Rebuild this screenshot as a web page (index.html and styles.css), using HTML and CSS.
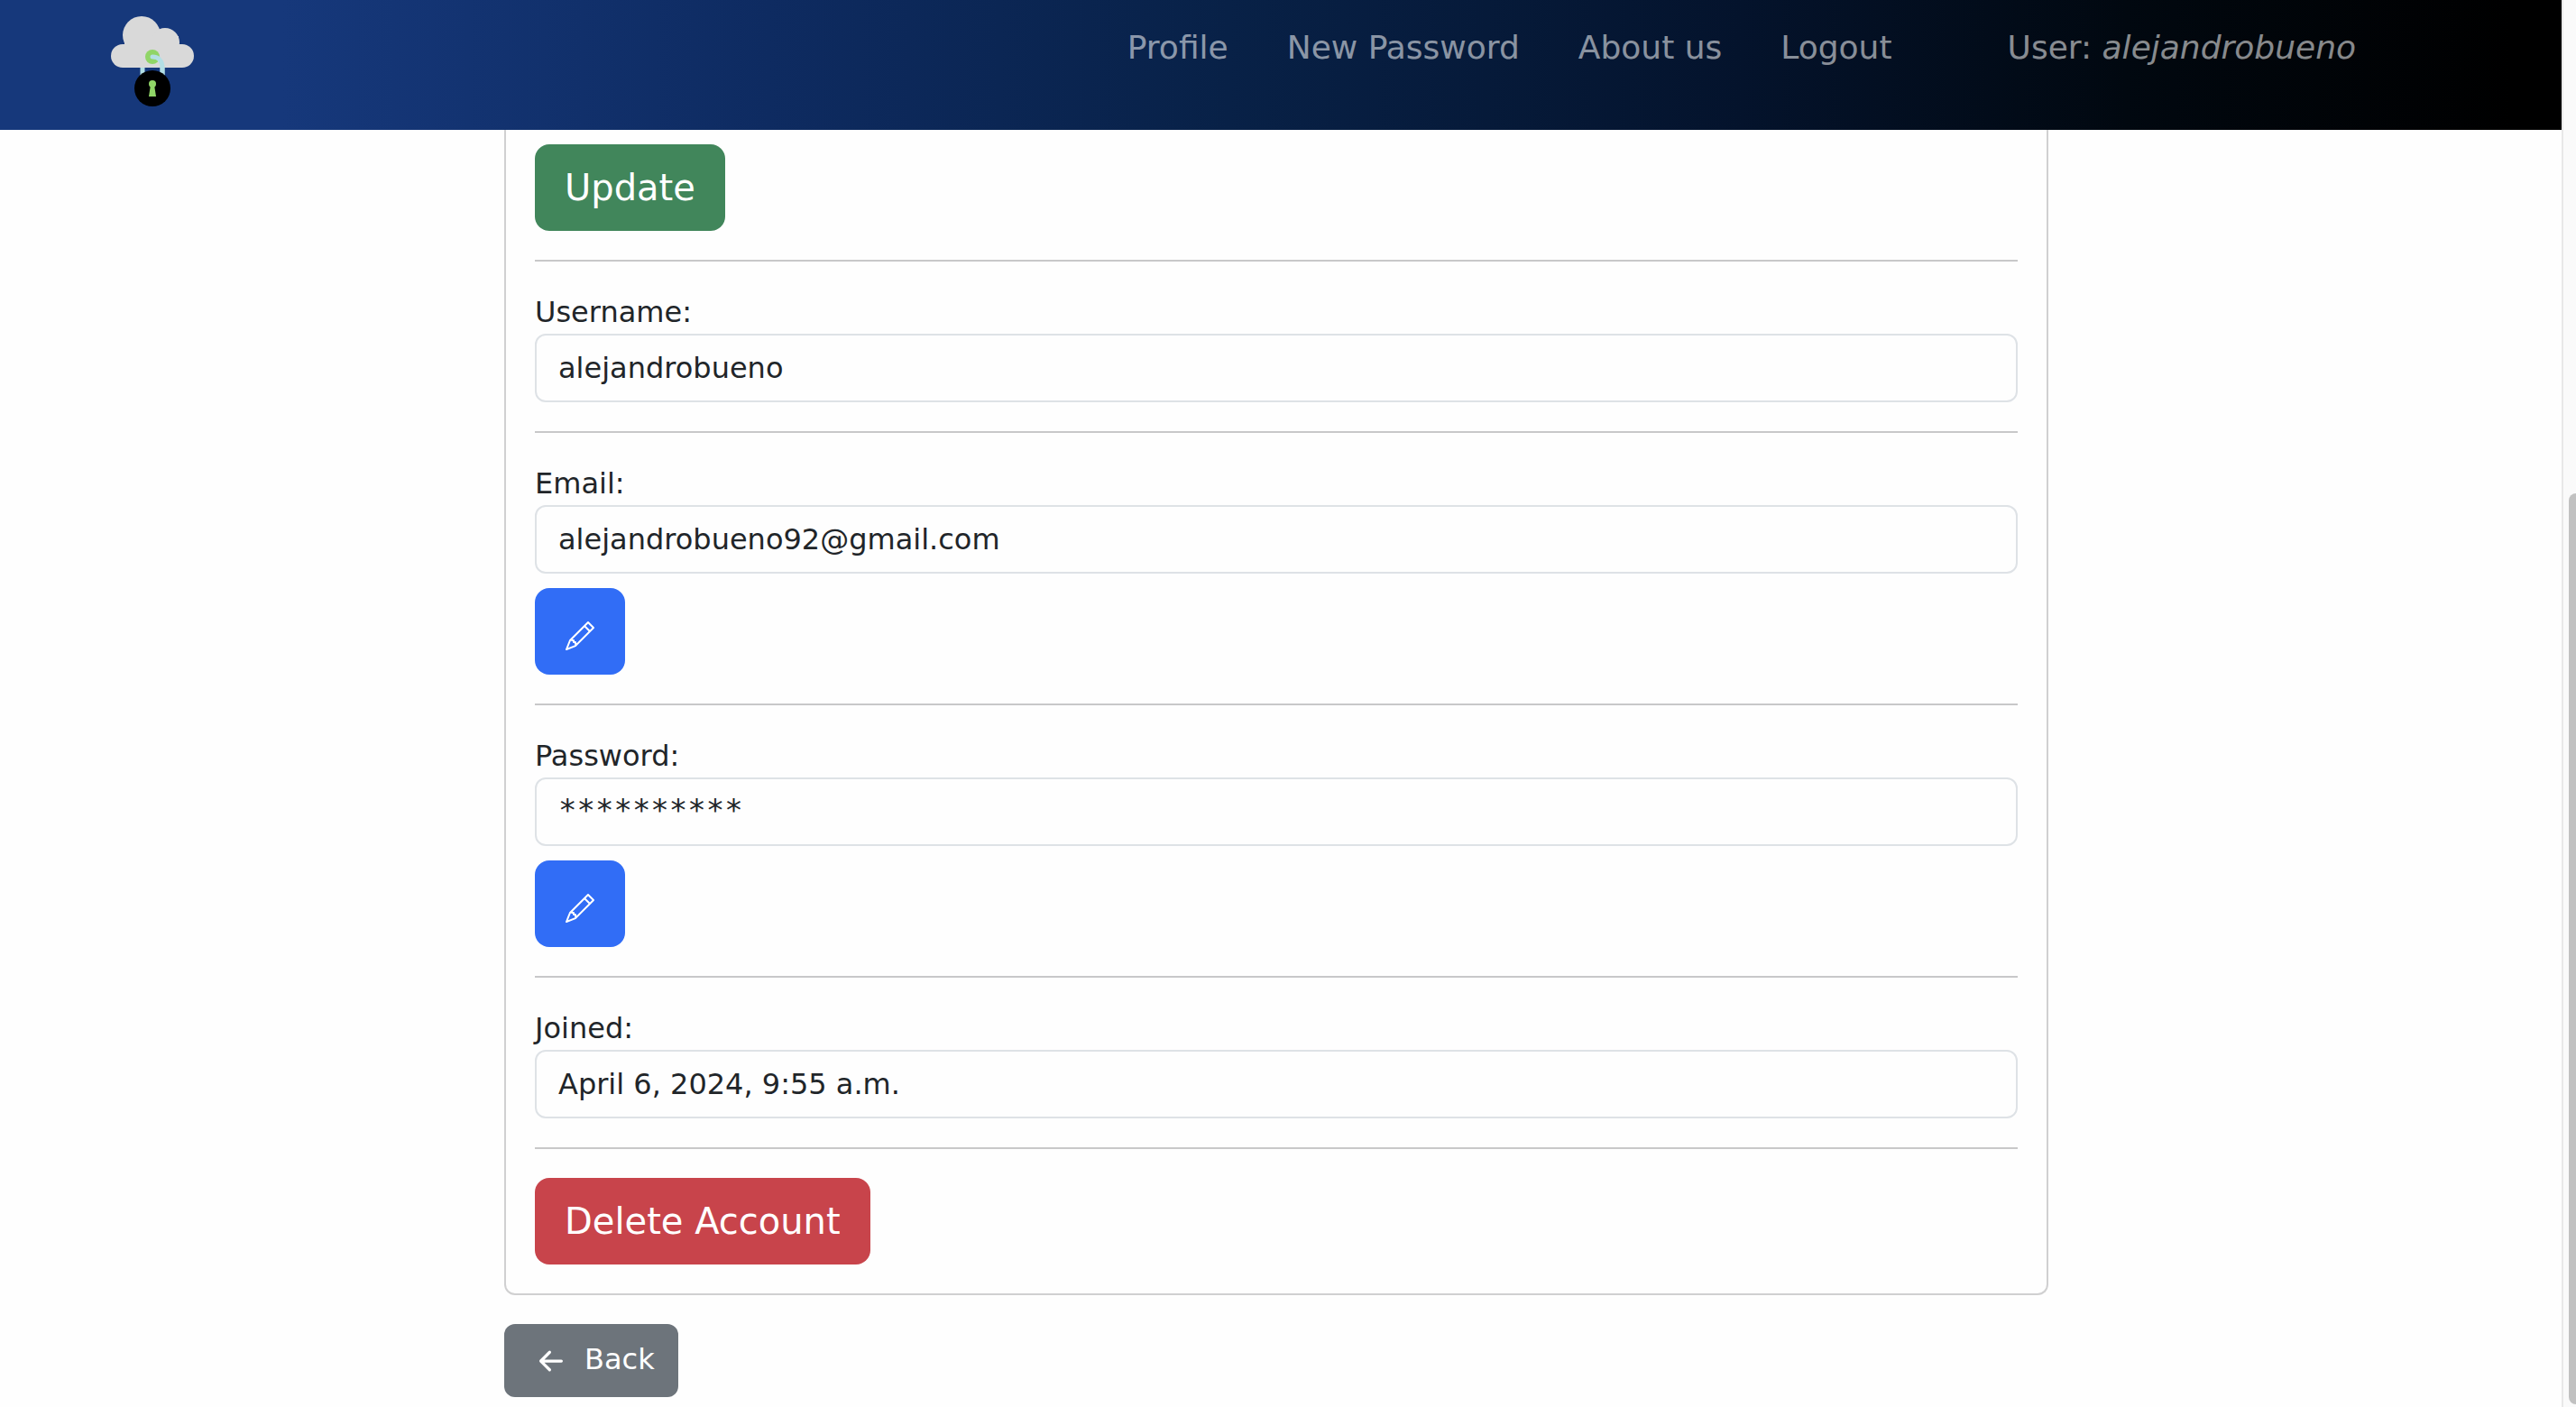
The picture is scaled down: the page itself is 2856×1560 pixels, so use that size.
FILE: index.html
```html
<!DOCTYPE html>
<html lang="en">
<head>
<meta charset="utf-8">
<title>Profile</title>
<link rel="stylesheet" href="styles.css">
</head>
<body>
<div class="page">
  <header class="navbar">
    <a class="brand" href="#" aria-label="Home">
      <svg class="logo" viewBox="23 18 92 100" aria-hidden="true">
        <path d="M58 72v20M80 72v20" fill="none" stroke="#b3dfe5" stroke-width="5"/>
        <g fill="#d9d9d9">
          <circle cx="57" cy="39" r="21"/>
          <circle cx="83" cy="47" r="16"/>
          <rect x="23" y="49" width="92" height="26" rx="13"/>
          <rect x="38" y="40" width="60" height="20"/>
        </g>
        <circle cx="69" cy="63" r="8" fill="#90d567"/>
        <path d="M69 63c7 0 11 5 11 12v12" fill="none" stroke="#b3dfe5" stroke-width="5" stroke-linecap="round"/>
        <circle cx="69" cy="98" r="20" fill="#000"/>
        <circle cx="69" cy="93" r="4" fill="#90d567"/>
        <path d="M67 94h4l2 13h-8z" fill="#90d567"/>
      </svg>
    </a>
    <nav class="nav">
      <a class="nav-link" href="#">Profile</a>
      <a class="nav-link" href="#">New Password</a>
      <a class="nav-link" href="#">About us</a>
      <a class="nav-link" href="#">Logout</a>
    </nav>
    <span class="nav-user">User: <i>alejandrobueno</i></span>
  </header>

  <main class="container">
    <form class="card">
      <button class="btn btn-lg btn-success" type="button">Update</button>
      <hr class="rule">
      <div class="field">
        <label for="username">Username:</label>
        <input class="control" id="username" type="text" value="alejandrobueno" readonly>
      </div>
      <hr class="rule">
      <div class="field">
        <label for="email">Email:</label>
        <input class="control" id="email" type="text" value="alejandrobueno92@gmail.com" readonly>
      </div>
      <button class="btn btn-lg btn-primary btn-edit" type="button" aria-label="Edit email">
        <svg class="icon-pencil" viewBox="0 0 16 16" fill="currentColor" aria-hidden="true"><path d="M12.146.146a.5.5 0 0 1 .708 0l3 3a.5.5 0 0 1 0 .708l-10 10a.5.5 0 0 1-.168.11l-5 2a.5.5 0 0 1-.65-.65l2-5a.5.5 0 0 1 .11-.168zM11.207 2.5 13.5 4.793 14.793 3.5 12.5 1.207zm1.586 3L10.5 3.207 4 9.707V10h.5a.5.5 0 0 1 .5.5v.5h.5a.5.5 0 0 1 .5.5v.5h.293zm-9.761 5.175-.106.106-1.528 3.821 3.821-1.528.106-.106A.5.5 0 0 1 5 12.5V12h-.5a.5.5 0 0 1-.5-.5V11h-.5a.5.5 0 0 1-.468-.325"/></svg>
      </button>
      <hr class="rule">
      <div class="field">
        <label for="password">Password:</label>
        <input class="control control-masked" id="password" type="text" value="**********" readonly>
      </div>
      <button class="btn btn-lg btn-primary btn-edit" type="button" aria-label="Edit password">
        <svg class="icon-pencil" viewBox="0 0 16 16" fill="currentColor" aria-hidden="true"><path d="M12.146.146a.5.5 0 0 1 .708 0l3 3a.5.5 0 0 1 0 .708l-10 10a.5.5 0 0 1-.168.11l-5 2a.5.5 0 0 1-.65-.65l2-5a.5.5 0 0 1 .11-.168zM11.207 2.5 13.5 4.793 14.793 3.5 12.5 1.207zm1.586 3L10.5 3.207 4 9.707V10h.5a.5.5 0 0 1 .5.5v.5h.5a.5.5 0 0 1 .5.5v.5h.293zm-9.761 5.175-.106.106-1.528 3.821 3.821-1.528.106-.106A.5.5 0 0 1 5 12.5V12h-.5a.5.5 0 0 1-.5-.5V11h-.5a.5.5 0 0 1-.468-.325"/></svg>
      </button>
      <hr class="rule">
      <div class="field">
        <label for="joined">Joined:</label>
        <input class="control" id="joined" type="text" value="April 6, 2024, 9:55 a.m." readonly>
      </div>
      <hr class="rule">
      <button class="btn btn-lg btn-danger" type="button">Delete Account</button>
    </form>
    <a class="btn btn-secondary" href="#">
      <svg class="icon-arrow" viewBox="0 0 16 16" fill="currentColor" aria-hidden="true"><path d="M12 8a.5.5 0 0 1-.5.5H5.707l2.147 2.146a.5.5 0 0 1-.708.708l-3-3a.5.5 0 0 1 0-.708l3-3a.5.5 0 1 1 .708.708L5.707 7.5H11.5a.5.5 0 0 1 .5.5"/></svg>
      <span class="btn-text">Back</span>
    </a>
  </main>
</div>
<div class="scroll-track" aria-hidden="true"><div class="scroll-thumb"></div></div>
</body>
</html>
```
FILE: styles.css
```css
*, *::before, *::after { box-sizing: border-box; }

body {
  margin: 0;
  display: flex;
  min-height: 100vh;
  overflow: hidden;
  background: #fefefe;
  color: #212529;
  font: 32px/48px Verdana, "DejaVu Sans", sans-serif;
}

.page { flex: 1; min-width: 0; }

/* Top bar */
.navbar {
  display: flex;
  align-items: flex-start;
  height: 144px;
  padding: 18px 228px 0 123px;
  background: linear-gradient(to right, #16387b 11%, #0e2b61 30%, #082147 48%, #04132c 68%, #010810 83%, #000 98%);
  color: rgba(255, 255, 255, .55);
  font-size: 36px;
  line-height: 54px;
}
.brand { margin-right: auto; }
.logo { display: block; width: 92px; height: 100px; }
.nav { display: flex; gap: 65px; padding-top: 8px; }
.nav-link { color: inherit; text-decoration: none; }
.nav-user { padding: 8px 0 0 128px; }

/* Profile card */
.container {
  width: 1722px;
  max-width: 100%;
  margin: 0 auto;
  padding-right: 10px;
}
.card {
  padding: 16px 32px 32px;
  border: 2px solid #d0d0d1;
  border-top: 0;
  border-radius: 0 0 12px 12px;
}
.rule {
  height: 2px;
  margin: 32px 0;
  border: 0;
  background: #c8c8c9;
}
.field { display: flex; flex-direction: column; }
.control {
  width: 100%;
  height: 76px;
  padding: 12px 24px;
  border: 2px solid #dee2e6;
  border-radius: 12px;
  background: transparent;
  color: inherit;
  font: inherit;
}
.control-masked {
  padding-bottom: 16px;
  font-family: "DejaVu Sans Mono", monospace;
  font-size: 34px;
}

/* Buttons */
.btn {
  display: flex;
  align-items: center;
  width: fit-content;
  border: 0;
  border-radius: 12px;
  color: #fff;
  font: inherit;
  text-decoration: none;
}
.btn-lg {
  height: 96px;
  padding: 0 33px;
  border-radius: 16px;
  font-size: 40px;
  line-height: 60px;
}
.btn-success { background: #41865b; }
.btn-primary { background: #316df6; }
.btn-danger { background: #c8444b; }
.btn-secondary {
  gap: 11px;
  height: 81px;
  margin-top: 32px;
  padding: 0 26px;
  background: #6d747b;
}
.btn-text { padding-bottom: 4px; }
.btn-edit { margin-top: 16px; padding: 10px 34px 0; }
.icon-pencil { width: 32px; height: 32px; }
.icon-arrow { width: 52px; height: 52px; }

/* Scroll bar */
.scroll-track {
  width: 16px;
  padding: 547px 0 3px 6px;
  border-left: 2px solid #e8e8e8;
  background: #fafafa;
}
.scroll-thumb {
  height: 100%;
  border-radius: 8px 0 0 8px;
  background: #c1c1c1;
}
```
